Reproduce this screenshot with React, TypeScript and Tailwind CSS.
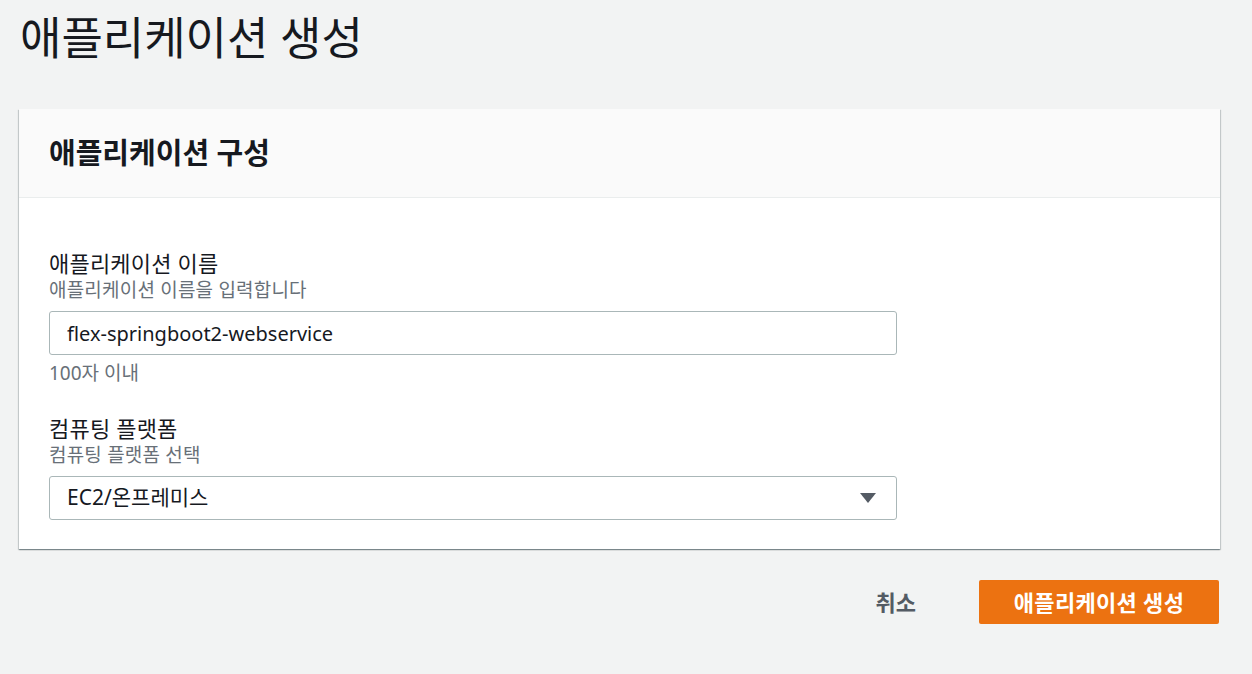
import React from 'react'

const font = { fontFamily: '"Noto Sans", "Noto Sans CJK KR", sans-serif' }

const Field = ({
  label,
  hint,
  children,
}: {
  label: string
  hint: string
  children: React.ReactNode
}) => (
  <div className="flex flex-col">
    <div className="text-[22px] leading-[28px] text-[#16191f] tracking-[0.2px]">{label}</div>
    <div className="text-[19px] leading-[26px] text-[#687078] tracking-[0.2px]">{hint}</div>
    <div className="mt-[8px]">{children}</div>
  </div>
)

const App = () => {
  return (
    <div
      className="min-h-[674px] w-full bg-[#f2f3f3] px-[19px] pt-[10px]"
      style={font}
    >
      <h1 className="text-[45px] leading-[56px] text-[#16191f] pl-[1px]">
        애플리케이션 생성
      </h1>

      <div className="mt-[43px] w-[1201px] bg-white shadow-[0_1px_1px_0_rgba(0,28,36,0.3),1px_1px_1px_0_rgba(0,28,36,0.15),-1px_1px_1px_0_rgba(0,28,36,0.15)]">
        <div className="h-[89px] bg-[#fafafa] border-b border-[#eaeded] flex items-center px-[30px]">
          <h2 className="text-[29px] font-bold text-[#16191f]">애플리케이션 구성</h2>
        </div>

        <div className="px-[30px] pt-[51px] pb-[29px] flex flex-col">
          <Field label="애플리케이션 이름" hint="애플리케이션 이름을 입력합니다">
            <input
              readOnly
              value="flex-springboot2-webservice"
              className="w-[848px] h-[44px] border border-[#aab7b8] rounded-[3px] px-[17px] text-[20px] text-[#16191f] outline-none bg-white"
              style={font}
            />
          </Field>
          <div className="mt-[6px] text-[19px] leading-[24px] text-[#687078]">100자 이내</div>

          <div className="mt-[29px]">
            <Field label="컴퓨팅 플랫폼" hint="컴퓨팅 플랫폼 선택">
              <div className="w-[848px] h-[44px] border border-[#aab7b8] rounded-[3px] px-[17px] flex items-center justify-between bg-white">
                <span className="text-[21px] text-[#16191f]">EC2/온프레미스</span>
                <svg width="16" height="11" viewBox="0 0 16 11" className="mr-[3px]">
                  <polygon points="0,0 16,0 8,10" fill="#545b64" />
                </svg>
              </div>
            </Field>
          </div>
        </div>
      </div>

      <div className="w-[1200px] flex justify-end items-center mt-[31px]">
        <button className="text-[22px] font-bold text-[#545b64] mr-[63px]">취소</button>
        <button className="w-[240px] h-[44px] rounded-[2px] bg-[#ec7211] text-white text-[22px] font-bold tracking-[0.3px]">
          애플리케이션 생성
        </button>
      </div>
    </div>
  )
}

export default App
